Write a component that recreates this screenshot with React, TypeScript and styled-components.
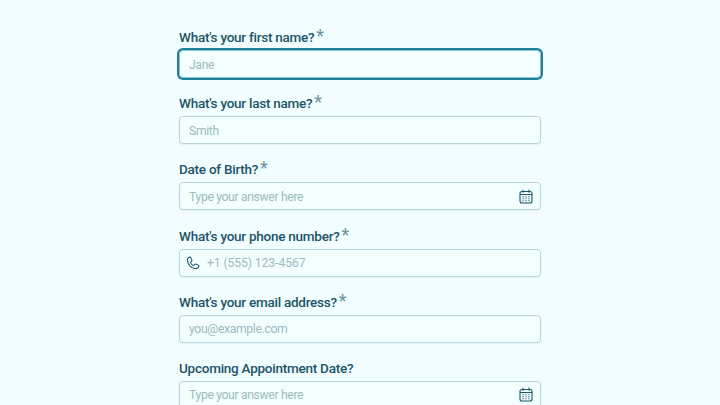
import React from "react";
import styled, { createGlobalStyle } from "styled-components";
import { PiPhone } from "react-icons/pi";

const Global = createGlobalStyle`
  html, body { margin: 0; padding: 0; background: #f1fdff; overflow: hidden; height: 405px; }
  body { font-family: Roboto, "Liberation Sans", sans-serif; }
`;

const Form = styled.form`
  width: 362px;
  margin: 0 auto;
  padding-top: 27px;
  display: flex;
  flex-direction: column;
  gap: 15.2px;
`;

const Field = styled.div`
  display: flex;
  flex-direction: column;
  gap: 1px;
`;

const Label = styled.label`
  display: flex;
  align-items: flex-start;
  height: 22px;
  font-size: 13.5px;
  line-height: 21px;
  font-weight: 500;
  color: #1d5468;
  letter-spacing: -0.25px;
`;

const Star = styled.span`
  font-size: 18px;
  line-height: 17px;
  margin-left: 2px;
  color: #6f929c;
  font-weight: 400;
`;

const Box = styled.div<{ $focused?: boolean; $icon?: boolean }>`
  height: 28px;
  box-sizing: border-box;
  display: flex;
  align-items: center;
  gap: 6px;
  padding: 0 7px 0 ${(p) => (p.$icon ? "5px" : "9px")};
  border-radius: 4px;
  background: #f3feff;
  border: 1px solid ${(p) => (p.$focused ? "#8fc4d0" : "#b9d5db")};
  box-shadow: ${(p) => (p.$focused ? "0 0 0 2px #1f7f97" : "0 1px 1px rgba(120,160,170,.12)")};
`;

const Input = styled.input`
  flex: 1;
  min-width: 0;
  border: 0;
  outline: 0;
  padding: 1px 0 0;
  background: transparent;
  font: 400 12.2px Roboto, "Liberation Sans", sans-serif;
  letter-spacing: -0.35px;
  color: #1d5468;
  &::placeholder { color: #9dbac1; opacity: 1; }
`;

const PhoneInput = styled(Input)`
  letter-spacing: -0.1px;
`;

const CalSvg = styled.svg`
  flex: none;
  width: 14px;
  height: 15px;
  color: #1d5468;
`;

const PhoneIcon = styled(PiPhone)`
  flex: none;
  width: 16px;
  height: 16px;
  color: #1d5468;
`;

const Calendar = () => (
  <CalSvg viewBox="0 0 14 15" fill="none" stroke="currentColor" strokeWidth="1.1">
    <rect x="1" y="2.5" width="12" height="11.5" rx="2" />
    <path d="M1 5.5h12M4 .8v3M10 .8v3" />
    <path d="M3.5 7.8h1.2M6.4 7.8h1.2M9.3 7.8h1.2M3.5 9.8h1.2M6.4 9.8h1.2M9.3 9.8h1.2M3.5 11.8h1.2M6.4 11.8h1.2M9.3 11.8h1.2" strokeWidth="1" />
  </CalSvg>
);

export default function App() {
  return (
    <>
      <Global />
      <Form>
        <Field>
          <Label>What's your first name?<Star>*</Star></Label>
          <Box $focused><Input placeholder="Jane" /></Box>
        </Field>
        <Field>
          <Label>What's your last name?<Star>*</Star></Label>
          <Box><Input placeholder="Smith" /></Box>
        </Field>
        <Field>
          <Label>Date of Birth?<Star>*</Star></Label>
          <Box><Input placeholder="Type your answer here" /><Calendar /></Box>
        </Field>
        <Field>
          <Label>What's your phone number?<Star>*</Star></Label>
          <Box $icon><PhoneIcon /><PhoneInput placeholder="+1 (555) 123-4567" /></Box>
        </Field>
        <Field>
          <Label>What's your email address?<Star>*</Star></Label>
          <Box><Input placeholder="you@example.com" /></Box>
        </Field>
        <Field>
          <Label>Upcoming Appointment Date?</Label>
          <Box><Input placeholder="Type your answer here" /><Calendar /></Box>
        </Field>
      </Form>
    </>
  );
}
